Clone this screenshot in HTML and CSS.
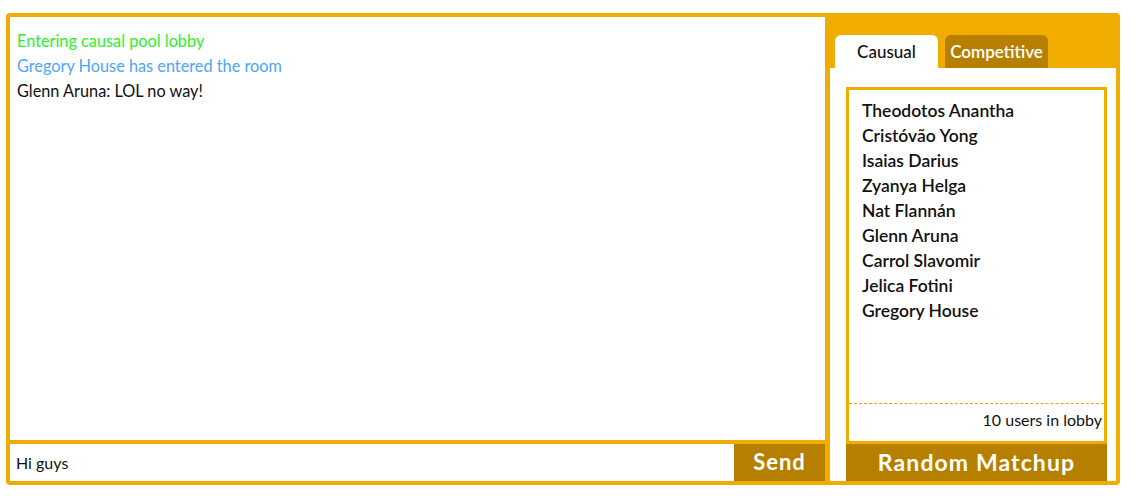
FILE: index.html
```html
<!DOCTYPE html>
<html>
<head>
<meta charset="utf-8">
<link rel="stylesheet" href="styles.css">
</head>
<body>
<div class="frame">
  <div class="chat">
    <div class="messages">
      <div class="msg sys">Entering causal pool lobby</div>
      <div class="msg join">Gregory House has entered the room</div>
      <div class="msg">Glenn Aruna: LOL no way!</div>
    </div>
    <div class="compose">
      <div class="input">Hi guys</div>
      <div class="send">Send</div>
    </div>
  </div>
  <div class="side">
    <div class="tabs">
      <div class="tab active">Causual</div>
      <div class="tab">Competitive</div>
    </div>
    <div class="panel">
      <div class="userbox">
        <ul class="users">
          <li>Theodotos Anantha</li>
          <li>Cristóvão Yong</li>
          <li>Isaias Darius</li>
          <li>Zyanya Helga</li>
          <li>Nat Flannán</li>
          <li>Glenn Aruna</li>
          <li>Carrol Slavomir</li>
          <li>Jelica Fotini</li>
          <li>Gregory House</li>
        </ul>
        <div class="count">10 users in lobby</div>
      </div>
      <div class="match">Random Matchup</div>
    </div>
  </div>
</div>
</body>
</html>
```

FILE: styles.css
```css
* { box-sizing: border-box; }
body {
  margin: 0;
  padding: 13px 20px 0 6px;
  font-family: Lato, "Open Sans", sans-serif;
  font-size: 16px;
  color: #111;
  background: #fff;
}
.frame {
  width: 1114px;
  height: 472px;
  background: #f0ac00;
  border-radius: 4px;
  padding: 4px;
  display: flex;
  gap: 5px;
}
.chat {
  width: 815px;
  display: flex;
  flex-direction: column;
  gap: 4px;
}
.messages {
  flex: 1;
  background: #fff;
  padding: 11px 7px;
}
.msg { line-height: 25px; height: 25px; font-size: 16.3px; }
.msg.sys { color: #2bef2b; }
.msg.join { color: #4ea6f5; }
.compose {
  height: 37px;
  display: flex;
}
.input {
  flex: 1;
  background: #fff;
  padding-left: 6px;
  line-height: 37px;
}
.send {
  width: 91px;
  background: #b77f00;
  color: #fff;
  font-weight: bold;
  font-size: 22px;
  letter-spacing: 1px;
  text-align: center;
  line-height: 36px;
}
.side {
  flex: 1;
  display: flex;
  flex-direction: column;
}
.tabs {
  height: 51px;
  display: flex;
  align-items: flex-end;
  padding-left: 5px;
  gap: 7px;
}
.tab {
  height: 33px;
  width: 103px;
  border-radius: 6px 6px 0 0;
  background: #b77f00;
  color: #fff;
  text-align: center;
  line-height: 34px;
  font-size: 17px;
  font-weight: 600;
}
.tab.active {
  background: #fff;
  color: #111;
  font-weight: 500;
}
.panel {
  flex: 1;
  background: #fff;
  padding: 19px 9px 0 16px;
  display: flex;
  flex-direction: column;
}
.userbox {
  flex: 1;
  border: 3px solid #f0ac00;
  display: flex;
  flex-direction: column;
}
.users {
  flex: 1;
  list-style: none;
  margin: 0;
  padding: 8px 13px;
  font-weight: 600;
  font-size: 17.5px;
}
.users li { line-height: 25px; height: 25px; }
.count {
  height: 38px;
  border-top: 1px dashed #e9a200;
  text-align: right;
  padding-right: 2px;
  line-height: 32px;
  font-size: 16px;
}
.match {
  height: 37px;
  background: #b77f00;
  color: #fff;
  font-weight: bold;
  font-size: 23px;
  letter-spacing: 1.1px;
  text-align: center;
  line-height: 36px;
}
```
